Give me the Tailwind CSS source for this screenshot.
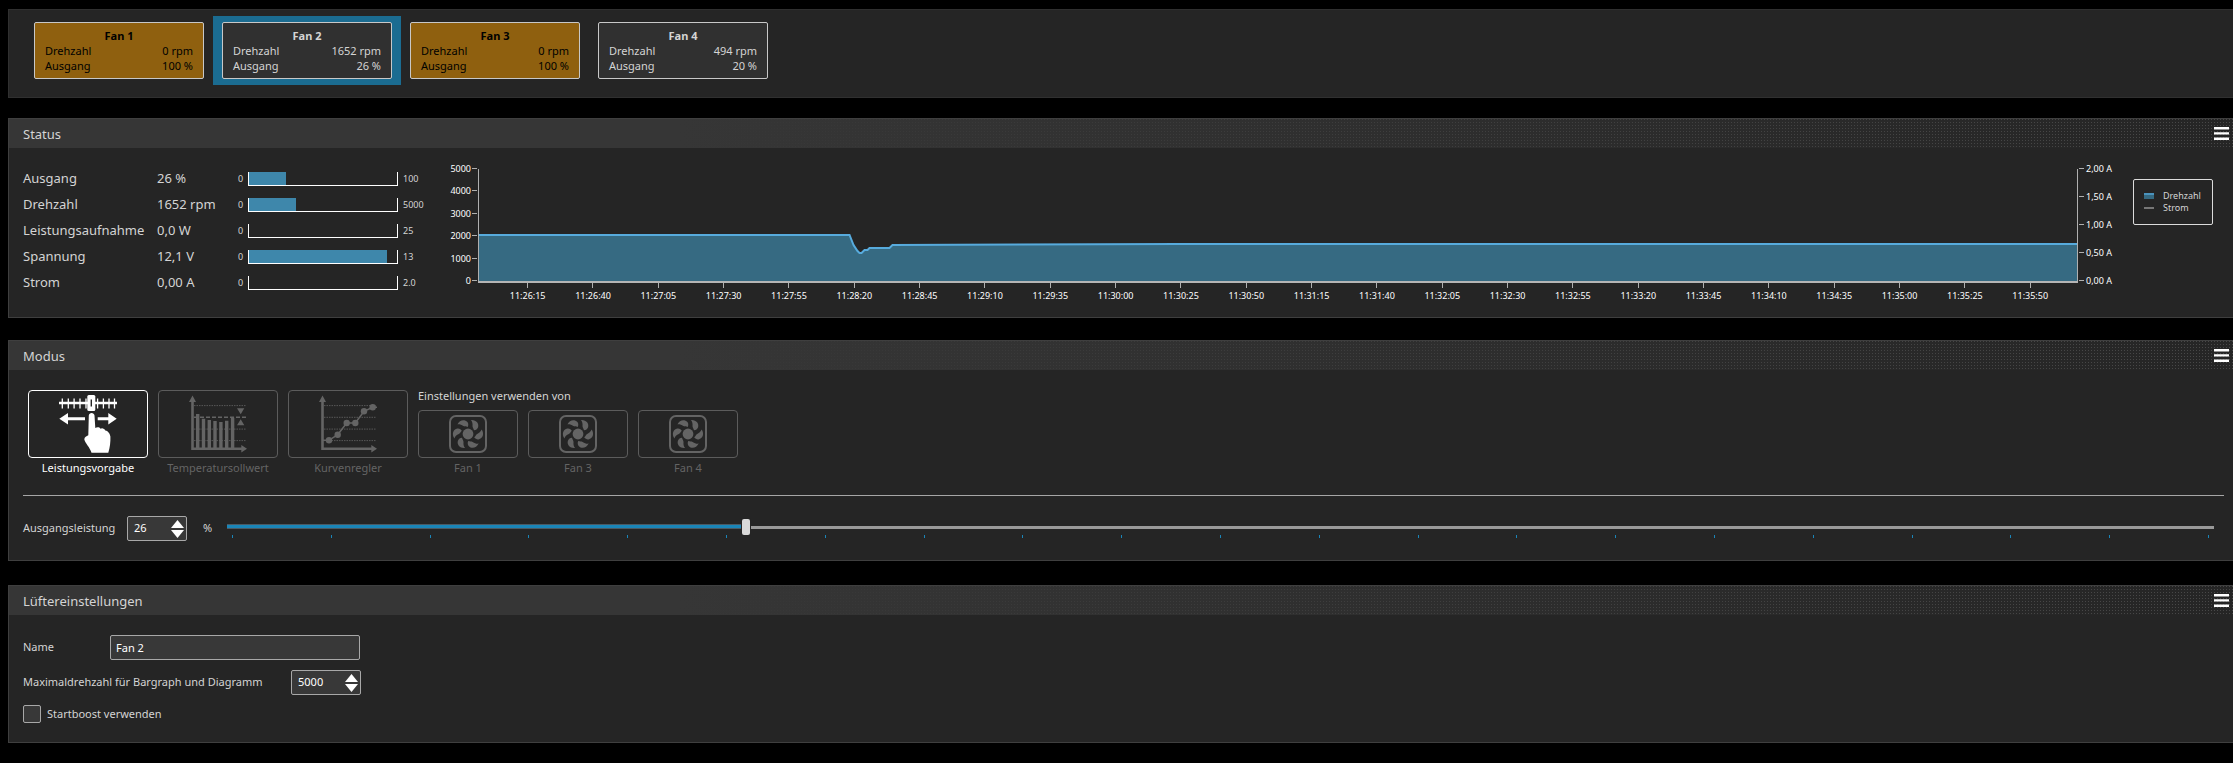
<!DOCTYPE html>
<html lang="de">
    <head>
        <meta charset="UTF-8">
        <meta name="viewport" content="width=device-width, initial-scale=1.0">
        <title>Fan 2</title>
        <script src="https://cdn.jsdelivr.net/npm/@tailwindcss/browser@4"></script>
    </head>
    <body class="min-h-screen bg-black pt-[9px] pl-2 font-['Noto_Sans',sans-serif] text-[11px] text-[#d4d4d4]">
        <!-- shared icons -->
        <svg class="hidden">
            <symbol id="icon-menu" viewBox="0 0 15 13">
                <path d="M0 0h15v2.400H0zM0 5.200h15v2.300H0zM0 10.500h15v2.400H0z" fill="currentColor"/>
            </symbol>
            <symbol id="icon-fan" viewBox="0 0 38 38">
                <rect x="1" y="1" width="36" height="36" rx="6" fill="none" stroke="currentColor" stroke-width="2"/>
                <g fill="currentColor" transform="translate(19 19)">
                    <circle r="5.4"/>
                    <path id="blade" d="M3 -14C8 -14.500 11.500 -10.500 10 -6.500C9.300 -4.800 8 -4 6 -3.700C5.500 -5.500 4.500 -6.800 4.500 -8C4.800 -10.500 4.200 -12.500 3 -14z"/>
                    <use href="#blade" transform="rotate(60)"/>
                    <use href="#blade" transform="rotate(120)"/>
                    <use href="#blade" transform="rotate(180)"/>
                    <use href="#blade" transform="rotate(240)"/>
                    <use href="#blade" transform="rotate(300)"/>
                </g>
            </symbol>
            <symbol id="icon-up" viewBox="0 0 13 8"><path d="M6.500 0L13 8H0z" fill="currentColor"/></symbol>
            <symbol id="icon-down" viewBox="0 0 13 8"><path d="M6.500 8L13 0H0z" fill="currentColor"/></symbol>
        </svg>

        <nav class="flex border border-r-0 border-[#303030] bg-[#252525] pt-[6px] pb-[12px] pl-4">
            <button type="button" class="px-[9px] py-[6px]">
                <span class="block w-[170px] rounded-xs border border-[#c8c8c8] bg-[#8f600f] px-[10px] py-[5px] leading-[15px] text-black">
                    <span class="block font-bold">Fan 1</span>
                    <span class="flex justify-between"><span>Drehzahl</span><span>0 rpm</span></span>
                    <span class="flex justify-between"><span>Ausgang</span><span>100 %</span></span>
                </span>
            </button>
            <button type="button" class="bg-[#1b6c91] px-[9px] py-[6px]">
                <span class="block w-[170px] rounded-xs border border-[#c8c8c8] bg-[#303030] px-[10px] py-[5px] leading-[15px]">
                    <span class="block font-bold">Fan 2</span>
                    <span class="flex justify-between"><span>Drehzahl</span><span>1652 rpm</span></span>
                    <span class="flex justify-between"><span>Ausgang</span><span>26 %</span></span>
                </span>
            </button>
            <button type="button" class="px-[9px] py-[6px]">
                <span class="block w-[170px] rounded-xs border border-[#c8c8c8] bg-[#8f600f] px-[10px] py-[5px] leading-[15px] text-black">
                    <span class="block font-bold">Fan 3</span>
                    <span class="flex justify-between"><span>Drehzahl</span><span>0 rpm</span></span>
                    <span class="flex justify-between"><span>Ausgang</span><span>100 %</span></span>
                </span>
            </button>
            <button type="button" class="px-[9px] py-[6px]">
                <span class="block w-[170px] rounded-xs border border-[#c8c8c8] bg-[#303030] px-[10px] py-[5px] leading-[15px]">
                    <span class="block font-bold">Fan 4</span>
                    <span class="flex justify-between"><span>Drehzahl</span><span>494 rpm</span></span>
                    <span class="flex justify-between"><span>Ausgang</span><span>20 %</span></span>
                </span>
            </button>
        </nav>

        <!-- Status -->
        <section class="mt-5 border border-r-0 border-[#3f3f3f] bg-[#252525]">
            <header class="flex h-[29px] items-center justify-between bg-[linear-gradient(to_right,#363636_30%,#36363600),repeating-linear-gradient(to_right,transparent_0px_1px,#252525_1px_3px),repeating-linear-gradient(#484848_0px_1px,#252525_1px_3px)] pr-1 pl-[14px]">
                <h2 class="pt-[2px] text-[13px]">Status</h2>
                <button type="button" aria-label="Menü" class="text-white"><svg class="h-[13px] w-[15px]"><use href="#icon-menu"/></svg></button>
            </header>
            <div class="flex items-start pt-[13px] pb-px pl-[14px]">
                <table class="mt-[5px] mb-5 shrink-0 table-fixed text-[13px]">
                    <colgroup>
                        <col class="w-[134px]"><col class="w-[77px]"><col class="w-[14px]"><col class="w-[150px]"><col class="w-[50px]">
                    </colgroup>
                    <tbody id="status_rows"></tbody>
                </table>
                <div class="flex h-[127px] w-[30px] shrink-0 flex-col justify-between text-right text-[9px] leading-[15px] text-white" id="rpm_axis"></div>
                <div class="min-w-0 flex-1 pt-2">
                    <svg class="block h-[112px] w-full border-x border-[#b0b0b0]" viewBox="0 0 1600 112" preserveAspectRatio="none">
                        <path d="M0 66H371L375 76L379 82L381 84H383L386 81H389L391 79H411L414 76L700 75H1600V112H0z" fill="#366a82"/>
                        <path d="M0 66H371L375 76L379 82L381 84H383L386 81H389L391 79H411L414 76L700 75H1600" fill="none" stroke="#57abdd" stroke-width="2" vector-effect="non-scaling-stroke"/>
                    </svg>
                    <div class="h-[2px] bg-[#b5b5b5]"></div>
                    <div class="flex pr-[15px] pl-[17px] text-[9px] leading-[15px] text-white" id="time_axis"></div>
                </div>
                <div class="flex h-[127px] w-[35px] shrink-0 flex-col justify-between text-[9px] leading-[15px] text-white" id="amp_axis"></div>
                <div class="mt-[18px] mr-5 ml-5 flex h-[46px] w-20 shrink-0 flex-col justify-center rounded-xs border border-[#dcdcdc] pl-[10px] text-[9px] leading-[12px]">
                    <div class="flex items-center gap-[9px]"><span class="h-[6px] w-[10px] border-t-2 border-[#4a93bd] bg-[#366a82]"></span>Drehzahl</div>
                    <div class="flex items-center gap-[9px]"><span class="h-[2px] w-[10px] bg-[#777777]"></span>Strom</div>
                </div>
            </div>
        </section>

        <!-- Modus -->
        <section class="mt-[22px] border border-r-0 border-[#3f3f3f] bg-[#252525]">
            <header class="flex h-[29px] items-center justify-between bg-[linear-gradient(to_right,#363636_30%,#36363600),repeating-linear-gradient(to_right,transparent_0px_1px,#252525_1px_3px),repeating-linear-gradient(#484848_0px_1px,#252525_1px_3px)] pr-1 pl-[14px]">
                <h2 class="pt-[2px] text-[13px]">Modus</h2>
                <button type="button" aria-label="Menü" class="text-white"><svg class="h-[13px] w-[15px]"><use href="#icon-menu"/></svg></button>
            </header>
            <div class="pt-5 pr-[9px] pb-[19px] pl-[14px]">
                <div class="flex gap-[10px] pl-[5px] leading-5">
                    <button type="button" class="w-[120px] text-white">
                        <span class="flex h-[68px] items-center justify-center rounded-sm border border-white">
                            <svg class="size-[60px]" viewBox="0 0 60 60" fill="currentColor">
                                <path d="M1 9H59" stroke="currentColor" stroke-width="2.6"/>
                                <path d="M4.300 4.500V14.500M10.300 4.500V14.500M16.100 4.500V14.500M22 4.500V14.500M28 4.500V14.500M39.600 4.500V14.500M45.400 4.500V14.500M51 4.500V14.500M56.500 4.500V14.500" stroke="currentColor" stroke-width="1.3"/>
                                <rect x="29.300" y="1" width="8" height="16" rx="1.500"/>
                                <path d="M33.300 5.500V12.500" stroke="#252525" stroke-width="1.4"/>
                                <path d="M1.300 24.700L10 19V23.200H27V26.200H10V30.500zM58.700 24.700L50.300 19V23.200H39.700V26.200H50.300V30.500z"/>
                                <path d="M30.300 41.300L30.800 21.500C31 18 36.200 18 36.500 21.500L37.300 34C39 32.800 41.500 33 42.500 34.700C44 33.500 46.500 34.500 47.300 36.500C49.500 36.300 52 39.500 52.400 42.500C52.600 48 52 53.500 50.300 58.700H33.500C32 53.500 27 49 26.300 45.300C26.500 43 28.500 42.200 30.300 41.300z"/>
                            </svg>
                        </span>
                        Leistungsvorgabe
                    </button>
                    <button type="button" class="w-[120px] text-[#646464]">
                        <span class="flex h-[68px] items-center justify-center rounded-sm border border-[#5c5c5c]">
                            <svg class="size-[60px]" viewBox="0 0 60 60" fill="currentColor">
                                <path d="M4.500 6V54.700H54" fill="none" stroke="currentColor" stroke-width="2.600"/>
                                <path d="M4.500 1.500L8 8H1zM59 54.700L53.300 51V58.500zM49 14.300H56.300L52.700 20.300zM49 31.300H56.300L52.700 25.300z"/>
                                <path d="M6 11.600H58M6 35.100H58M6 46.600H58" stroke="currentColor" stroke-width="0.8" stroke-dasharray="1.500 1"/>
                                <path d="M6 23.300H58" stroke="currentColor" stroke-width="1.400" stroke-dasharray="4 2"/>
                                <path d="M9.700 20V54M15.500 24.700V54M21.300 26V54M27 27V54M32.900 28V54M38.700 26.700V54M44.600 23.700V54" stroke="currentColor" stroke-width="3.400"/>
                            </svg>
                        </span>
                        Temperatursollwert
                    </button>
                    <button type="button" class="w-[120px] text-[#646464]">
                        <span class="flex h-[68px] items-center justify-center rounded-sm border border-[#5c5c5c]">
                            <svg class="size-[60px]" viewBox="0 0 60 60" fill="currentColor">
                                <path d="M4.500 6V54.700H54" fill="none" stroke="currentColor" stroke-width="2.600"/>
                                <path d="M4.500 1.500L8 8H1zM59 54.700L53.300 51V58.500z"/>
                                <path d="M6 11.600H58M6 23.300H58M6 35.100H58M6 46.600H58" stroke="currentColor" stroke-width="0.8" stroke-dasharray="1.500 1"/>
                                <path d="M4.500 46.300H11L19.700 40.700L28.700 29H37.300L46 17.300L54.700 13.300H59" fill="none" stroke="currentColor" stroke-width="1.600"/>
                                <circle cx="11" cy="46.300" r="3.200"/><circle cx="19.700" cy="40.700" r="3.200"/><circle cx="28.700" cy="29" r="3.200"/>
                                <circle cx="37.300" cy="29" r="3.200"/><circle cx="46" cy="17.300" r="3.200"/><circle cx="54.700" cy="13.300" r="3.200"/>
                            </svg>
                        </span>
                        Kurvenregler
                    </button>
                    <div>
                        <p class="mb-2 leading-[12px]">Einstellungen verwenden von</p>
                        <div class="flex gap-[10px] text-[#646464]">
                            <button type="button" class="w-[100px]">
                                <span class="flex h-12 items-center justify-center rounded-sm border border-[#5c5c5c]"><svg class="size-[38px]"><use href="#icon-fan"/></svg></span>
                                Fan 1
                            </button>
                            <button type="button" class="w-[100px]">
                                <span class="flex h-12 items-center justify-center rounded-sm border border-[#5c5c5c]"><svg class="size-[38px]"><use href="#icon-fan"/></svg></span>
                                Fan 3
                            </button>
                            <button type="button" class="w-[100px]">
                                <span class="flex h-12 items-center justify-center rounded-sm border border-[#5c5c5c]"><svg class="size-[38px]"><use href="#icon-fan"/></svg></span>
                                Fan 4
                            </button>
                        </div>
                    </div>
                </div>
                <hr class="mt-[17px] mb-5 border-[#a6a6a6]">
                <div class="flex items-center pr-[10px]">
                    <label for="power" class="w-[104px] shrink-0">Ausgangsleistung</label>
                    <div class="flex h-[25px] w-[60px] shrink-0 items-center rounded-xs border border-[#a8a8a8] bg-[#383838] pr-[2px] pl-[6px] text-white">
                        <input id="power" type="number" value="26" min="0" max="100" class="min-w-0 flex-1 [appearance:textfield] outline-none [&::-webkit-inner-spin-button]:appearance-none">
                        <span class="flex flex-col gap-[2px]">
                            <button type="button" aria-label="Mehr" data-step="1" data-for="power"><svg class="block h-2 w-[13px]"><use href="#icon-up"/></svg></button>
                            <button type="button" aria-label="Weniger" data-step="-1" data-for="power"><svg class="block h-2 w-[13px]"><use href="#icon-down"/></svg></button>
                        </span>
                    </div>
                    <span class="w-10 shrink-0 pl-4">%</span>
                    <div class="min-w-0 flex-1">
                        <input id="power_slider" type="range" min="0" max="100" value="26" aria-label="Ausgangsleistung" style="--value: 26%" class="block h-4 w-full appearance-none bg-[linear-gradient(#1a85b8,#1a85b8),linear-gradient(#4a5a64,#4a5a64),linear-gradient(#999999,#999999)] bg-[size:var(--value)_3px,var(--value)_5px,100%_3px] bg-[position:0_6px,0_5px,0_7px] bg-no-repeat [&::-webkit-slider-thumb]:h-4 [&::-webkit-slider-thumb]:w-2 [&::-webkit-slider-thumb]:appearance-none [&::-webkit-slider-thumb]:rounded-xs [&::-webkit-slider-thumb]:bg-[#d9d9d9] [&::-webkit-slider-thumb]:shadow-[0_0_0_1px_#252525]">
                        <div class="flex h-1 justify-between px-[5px]" id="slider_ticks"></div>
                    </div>
                </div>
            </div>
        </section>

        <!-- Lüftereinstellungen -->
        <section class="mt-6 border border-r-0 border-[#3f3f3f] bg-[#252525]">
            <header class="flex h-[29px] items-center justify-between bg-[linear-gradient(to_right,#363636_30%,#36363600),repeating-linear-gradient(to_right,transparent_0px_1px,#252525_1px_3px),repeating-linear-gradient(#484848_0px_1px,#252525_1px_3px)] pr-1 pl-[14px]">
                <h2 class="pt-[2px] text-[13px]">Lüftereinstellungen</h2>
                <button type="button" aria-label="Menü" class="text-white"><svg class="h-[13px] w-[15px]"><use href="#icon-menu"/></svg></button>
            </header>
            <form class="flex flex-col gap-[10px] pt-5 pb-[19px] pl-[14px]">
                <div class="flex items-center">
                    <label for="fan_name" class="w-[87px]">Name</label>
                    <input id="fan_name" type="text" value="Fan 2" class="h-[25px] w-[250px] rounded-xs border border-[#a8a8a8] bg-[#383838] px-[5px] text-white">
                </div>
                <div class="flex items-center">
                    <label for="max_rpm" class="w-[268px]">Maximaldrehzahl für Bargraph und Diagramm</label>
                    <div class="flex h-[25px] w-[70px] items-center rounded-xs border border-[#a8a8a8] bg-[#383838] pr-[2px] pl-[6px] text-white">
                        <input id="max_rpm" type="number" value="5000" class="min-w-0 flex-1 [appearance:textfield] outline-none [&::-webkit-inner-spin-button]:appearance-none">
                        <span class="flex flex-col gap-[2px]">
                            <button type="button" aria-label="Mehr" data-step="1" data-for="max_rpm"><svg class="block h-2 w-[13px]"><use href="#icon-up"/></svg></button>
                            <button type="button" aria-label="Weniger" data-step="-1" data-for="max_rpm"><svg class="block h-2 w-[13px]"><use href="#icon-down"/></svg></button>
                        </span>
                    </div>
                </div>
                <div class="flex h-[18px] items-center gap-[6px]">
                    <input id="boost" type="checkbox" class="size-[18px] appearance-none rounded-xs border border-[#a8a8a8] bg-[#383838] checked:bg-[#1a85b8]">
                    <label for="boost">Startboost verwenden</label>
                </div>
            </form>
        </section>

        <script>
            function getEl(id) {
                return document.getElementById(id)
            }

            // ================== Status table
            // label, value, bar maximum, filled percentage
            const readings = [
                ['Ausgang', '26 %', '100', 25],
                ['Drehzahl', '1652 rpm', '5000', 32],
                ['Leistungsaufnahme', '0,0 W', '25', 0],
                ['Spannung', '12,1 V', '13', 93],
                ['Strom', '0,00 A', '2.0', 0],
            ];
            getEl('status_rows').innerHTML = readings.map(([label, value, max, fill]) => `
                <tr class="h-[26px]">
                    <th scope="row" class="text-left font-normal whitespace-nowrap">${label}</th>
                    <td class="whitespace-nowrap">${value}</td>
                    <td class="pl-1 text-[9px]">0</td>
                    <td><div class="h-[14px] border border-t-0 border-white"><div class="h-full bg-[#3e87ab]" style="width: ${fill}%"></div></div></td>
                    <td class="pl-[5px] text-[9px]">${max}</td>
                </tr>`).join('');

            // ================== Chart axes
            getEl('rpm_axis').innerHTML = [5000, 4000, 3000, 2000, 1000, 0].map(v =>
                `<div class="flex items-center justify-end gap-px pr-px">${v}<span class="h-px w-[5px] bg-[#b0b0b0]"></span></div>`).join('');
            getEl('amp_axis').innerHTML = ['2,00', '1,50', '1,00', '0,50', '0,00'].map(v =>
                `<div class="flex items-center gap-[2px] pl-px whitespace-nowrap"><span class="h-px w-[5px] shrink-0 bg-[#b0b0b0]"></span>${v} A</div>`).join('');

            let times = '';
            for (let s = 26 * 60 + 15; s <= 35 * 60 + 50; s += 25) {
                const text = `11:${Math.floor(s / 60)}:${String(s % 60).padStart(2, '0')}`;
                times += `<div class="flex min-w-0 flex-1 flex-col items-center"><span class="h-[5px] w-px bg-[#b0b0b0]"></span>${text}</div>`;
            }
            getEl('time_axis').innerHTML = times;

            // ================== Slider
            getEl('slider_ticks').innerHTML = '<span class="h-[3px] w-px bg-[#1a85b8]"></span>'.repeat(21);

            function setPower(value) {
                getEl('power').value = value;
                getEl('power_slider').value = value;
                getEl('power_slider').style.setProperty('--value', value + '%');
            }
            getEl('power_slider').addEventListener('input', e => setPower(e.target.value));
            getEl('power').addEventListener('input', e => setPower(e.target.value));
            document.querySelectorAll('[data-step]').forEach(btn => btn.addEventListener('click', () => {
                const input = getEl(btn.dataset.for);
                input.value = Number(input.value) + Number(btn.dataset.step);
                input.dispatchEvent(new Event('input'));
            }));
        </script>
    </body>
</html>
